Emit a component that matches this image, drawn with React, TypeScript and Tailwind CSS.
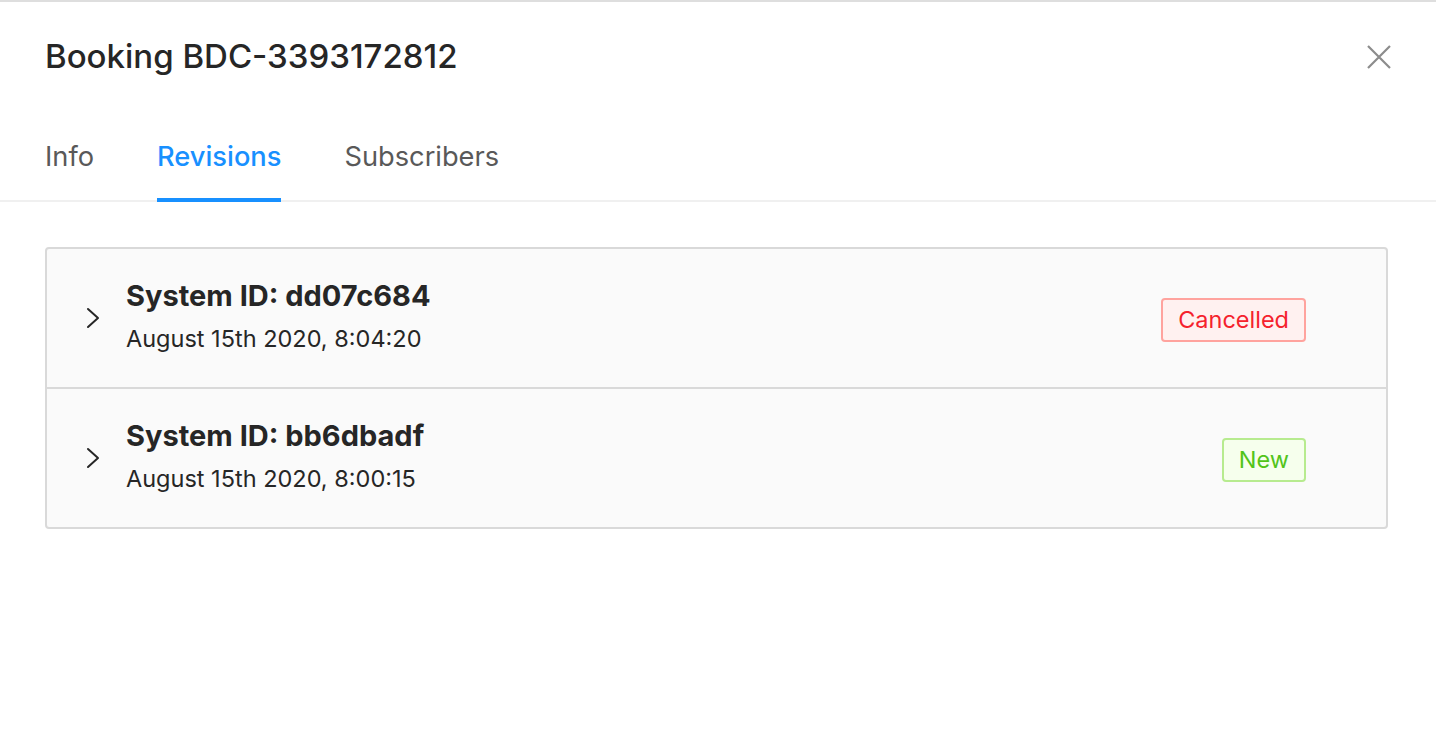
import React from 'react';

type Revision = {
  id: string;
  date: string;
  status: 'Cancelled' | 'New';
};

const revisions: Revision[] = [
  { id: 'dd07c684', date: 'August 15th 2020, 8:04:20', status: 'Cancelled' },
  { id: 'bb6dbadf', date: 'August 15th 2020, 8:00:15', status: 'New' },
];

const tabs = ['Info', 'Revisions', 'Subscribers'];

const Chevron = () => (
  <svg width="16" height="22" viewBox="0 0 16 22" fill="none" className="shrink-0">
    <path d="M3 2 L13 11 L3 20" stroke="#262626" strokeWidth="2" strokeLinecap="round" strokeLinejoin="round" />
  </svg>
);

const StatusTag = ({ status }: { status: Revision['status'] }) => {
  const cls =
    status === 'Cancelled'
      ? 'border-[#ffa39e] bg-[#fff1f0] text-[#f5222d]'
      : 'border-[#b7eb8f] bg-[#f6ffed] text-[#52c41a]';
  return (
    <span className={`mt-[4px] inline-flex h-[44px] items-center rounded-[4px] border-2 px-[15px] text-[23.5px] ${cls}`}>
      {status}
    </span>
  );
};

export default function App() {
  return (
    <div
      className="min-h-[732px] w-full border-t-2 border-[#dedede] bg-white"
      style={{ fontFamily: 'Inter, "Noto Sans", sans-serif' }}
    >
      <div className="flex h-[108px] items-center justify-between pl-[45px] pr-[40px] pt-[2px]">
        <h1 className="text-[33px] font-medium text-[#262626]">Booking BDC-3393172812</h1>
        <button className="p-1 text-[#8c8c8c]">
          <svg width="26" height="26" viewBox="0 0 26 26" fill="none">
            <path d="M2 2 L24 24 M24 2 L2 24" stroke="currentColor" strokeWidth="2.2" />
          </svg>
        </button>
      </div>

      <div className="flex gap-[63px] border-b-2 border-[#f0f0f0] pl-[45px]">
        {tabs.map((tab) => {
          const active = tab === 'Revisions';
          return (
            <div
              key={tab}
              className={`-mb-[2px] flex h-[92px] items-center border-b-4 pt-[6px] text-[27.25px] ${
                active ? 'border-[#1890ff] text-[#1890ff] font-medium' : 'border-transparent text-[#595959]'
              }`}
            >
              {tab}
            </div>
          );
        })}
      </div>

      <div className="px-[45px] pt-[45px]">
        <div className="mr-[3px] rounded-[4px] border-2 border-[#d9d9d9] bg-[#fafafa]">
          {revisions.map((rev, i) => (
            <div
              key={rev.id}
              className={`flex items-center pl-[38px] pr-[80px] ${
                i > 0 ? 'h-[140px] border-t-2 border-[#d9d9d9]' : 'h-[138px]'
              }`}
            >
              <Chevron />
              <div className="ml-[25px] flex-1 pb-[4px]">
                <div className="text-[29px] font-bold leading-[36px] text-[#262626]">System ID: {rev.id}</div>
                <div className="mt-[10px] text-[23.5px] leading-[30px] text-[#262626]">{rev.date}</div>
              </div>
              <StatusTag status={rev.status} />
            </div>
          ))}
        </div>
      </div>
    </div>
  );
}
